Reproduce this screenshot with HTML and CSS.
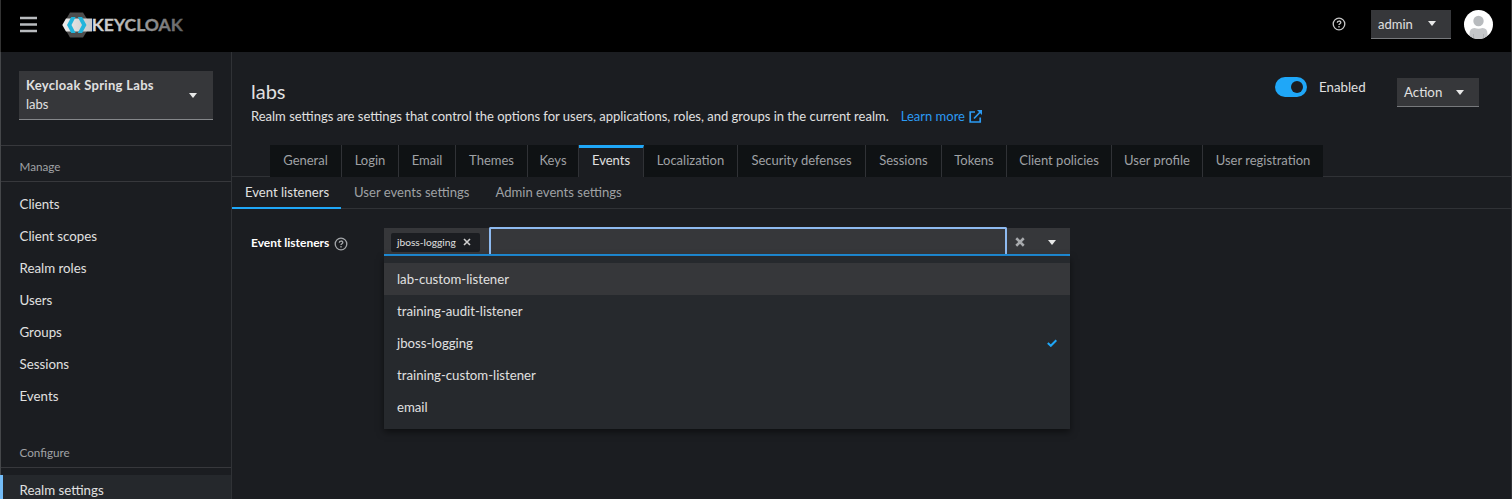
FILE: index.html
```html
<!DOCTYPE html>
<html lang="en"><head><meta charset="utf-8"><title>Keycloak Administration Console</title><link rel="stylesheet" href="styles.css"></head>
<body>
<header class="masthead">
  <svg class="burger" viewBox="0 0 17 15"><path d="M0 1h17M0 7.500h17M0 14h17" stroke="#b8bbbe" stroke-width="2.400"/></svg>
  <svg class="logo" viewBox="0 0 123 26" role="img" aria-label="Keycloak">
    <defs>
      <linearGradient id="word" x1="0" x2="1"><stop offset="0" stop-color="#dcdcdc"/><stop offset=".3" stop-color="#bdbdbd"/><stop offset="1" stop-color="#626262"/></linearGradient>
      <linearGradient id="band" x1="0" x2="1"><stop offset="0" stop-color="#eee"/><stop offset="1" stop-color="#c8c8c8"/></linearGradient>
    </defs>
    <path d="M8 .5h13L27 10v6L21 25.500H8L2.500 16v-6z" fill="#4d4d4d"/>
    <path d="M4 6.500h26v13H4L.3 13z" fill="url(#band)"/>
    <path d="M9.300 5h4.300L9.500 13l4.100 8H9.300L5 13z" fill="#21b5dc"/>
    <path d="M15.800 5h4.300L24.500 13l-4.400 8h-4.300L20 13z" fill="#21b5dc"/>
    <text class="word" x="29.800" y="19.300" textLength="91" lengthAdjust="spacingAndGlyphs" fill="url(#word)">KEYCLOAK</text>
  </svg>
  <svg class="help top-help" viewBox="0 0 14 14"><circle cx="7" cy="7" r="5.800"/><path d="M5.300 5.700C5.300 3.500 8.800 3.500 8.800 5.500 8.800 6.900 7 6.700 7 8.100M7 9.100v1.300"/></svg>
  <button class="toggle user"><span>admin</span><i class="caret"></i></button>
  <svg class="avatar" viewBox="0 0 29 29"><defs><clipPath id="round"><circle cx="14.500" cy="14.500" r="14.500"/></clipPath></defs><g clip-path="url(#round)"><path fill="#fff" d="M0 0h29v29H0z"/><circle cx="14.500" cy="11" r="5.200" fill="#b8bbbe"/><path d="M5.500 29v-5q0-6 5-6 4 1.500 8 0 5 0 5 6v5z" fill="#c4c6c8"/><path d="M9.500 24v5M19.500 24v5" stroke="#b0b2b5"/></g></svg>
</header>
<div class="body">
  <nav class="sidebar">
    <div class="realm-box"><button class="realm"><span><b>Keycloak Spring Labs</b><span class="realm-id">labs</span></span><i class="caret"></i></button></div>
    <h2 class="group">Manage</h2>
    <ul class="nav"><li><span>Clients</span></li><li><span>Client scopes</span></li><li><span>Realm roles</span></li><li><span>Users</span></li><li><span>Groups</span></li><li><span>Sessions</span></li><li><span>Events</span></li></ul>
    <h2 class="group second">Configure</h2>
    <ul class="nav"><li class="current"><span>Realm settings</span></li></ul>
  </nav>
  <main class="main">
    <section class="head">
      <div class="intro"><h1>labs</h1><p><span class="desc">Realm settings are settings that control the options for users, applications, roles, and groups in the current realm.</span><a class="learn"><span>Learn more</span><svg viewBox="0 0 13 13"><path d="M6 2H1.200v10h10V7.500M5 8.500 11.700 1.500" fill="none" stroke="currentColor" stroke-width="1.700"/><path d="M8 0h5v5z" fill="currentColor"/></svg></a></p></div>
      <span class="switch"></span><span class="enabled">Enabled</span>
      <button class="toggle action"><span>Action</span><i class="caret"></i></button>
    </section>
    <div class="tabs"><span class="tab">General</span><span class="tab">Login</span><span class="tab">Email</span><span class="tab">Themes</span><span class="tab">Keys</span><span class="tab active">Events</span><span class="tab">Localization</span><span class="tab">Security defenses</span><span class="tab">Sessions</span><span class="tab">Tokens</span><span class="tab">Client policies</span><span class="tab">User profile</span><span class="tab">User registration</span></div>
    <div class="subtabs"><span class="subtab chosen">Event listeners</span><span class="subtab">User events settings</span><span class="subtab">Admin events settings</span></div>
    <div class="form">
      <label class="label"><span>Event listeners</span><svg class="help" viewBox="0 0 14 14"><circle cx="7" cy="7" r="5.800"/><path d="M5.300 5.700C5.300 3.500 8.800 3.500 8.800 5.500 8.800 6.900 7 6.700 7 8.100M7 9.100v1.300"/></svg></label>
      <div class="select">
        <div class="control">
          <span class="chip"><span>jboss-logging</span><svg class="x" viewBox="0 0 8 8"><path d="m1 1 6 6m0-6L1 7"/></svg></span>
          <span class="field"></span>
          <svg class="x clear" viewBox="0 0 8 8"><path d="m1 1 6 6m0-6L1 7"/></svg><i class="caret"></i>
        </div>
        <ul class="menu"><li class="hover"><span>lab-custom-listener</span></li><li><span>training-audit-listener</span></li><li><span>jboss-logging</span><svg class="check" viewBox="0 0 10 8"><path d="m.8 4 3 2.800L9.300 1.200"/></svg></li><li><span>training-custom-listener</span></li><li><span>email</span></li></ul>
      </div>
    </div>
  </main>
</div>
</body></html>
```
FILE: styles.css
```css
* { box-sizing: border-box; }
body { margin: 0; width: 1512px; height: 499px; overflow: hidden; background: #1b1d21; color: #e0e0e0; font: 13px/20px Lato, sans-serif; }
h1, h2, p, ul { margin: 0; padding: 0; font-weight: 400; list-style: none; }
button { font: inherit; color: inherit; border: 0; text-align: left; }
svg { display: block; flex: none; }
.caret { flex: none; border: 4.500px solid transparent; border-top: 5px solid #e8e8e8; border-bottom: 0; }
.masthead { height: 52px; background: #000; display: flex; align-items: center; padding: 0 20px 4px 19px; border-left: 1px solid #333; border-right: 1px solid #333; }
.burger { width: 17px; height: 15px; overflow: visible; }
.logo { width: 123px; height: 26px; margin: 2px 0 0 25px; }
.word { font: 700 17.500px Lato, sans-serif; stroke: url(#word); stroke-width: .3; }
.help { width: 14px; height: 14px; fill: none; stroke: #a3a6a9; stroke-width: 1.300; }
.top-help { margin-left: auto; stroke: #c7c7c7; }
.toggle { display: flex; align-items: center; justify-content: space-between; background: #36373a; border-bottom: 1px solid #77797c; height: 29px; padding: 0 15px 0 7px; font-size: 13.300px; }
.user { width: 80px; margin-left: 25px; font-size: 13px; }
.avatar { width: 29px; height: 29px; margin-left: 13px; margin-right: -2px; }
.body { display: grid; grid-template-columns: 232px 1fr; height: 447px; }
.sidebar { border-left: 1px solid #45474a; border-right: 1px solid #303236; }
.realm-box { height: 94px; padding: 19px 18px; border-bottom: 1px solid #37383c; }
.realm { width: 194px; height: 49px; display: flex; align-items: center; justify-content: space-between; background: #36373a; border-bottom: 1px solid #85878a; padding: 0 16px 0 7px; line-height: 19px; }
.realm b, .realm-id { display: block; }
.realm b { letter-spacing: .3px; }
.group { height: 36px; border-bottom: 1px solid #37383c; font-size: 11.700px; line-height: 20px; padding: 10px 0 0 18.500px; color: #a0a2a5; }
.nav { padding-top: 7px; font-size: 13.300px; }
.nav li { height: 32px; line-height: 31px; padding-left: 18.500px; }
.second { margin-top: 19px; }
.nav .current { background: #25282c; border-left: 3px solid #73bcf7; margin-left: -1px; padding-left: 16.500px; line-height: 31px; }
.main { border-right: 1px solid #303236; min-width: 0; }
.head { height: 93px; display: flex; padding-left: 19px; }
.intro { width: 1024px; }
h1 { font-size: 20px; line-height: 28px; padding: 25px 0 1px; }
p { display: flex; white-space: nowrap; }
.learn { color: #2b9af3; display: flex; align-items: center; margin-left: 12px; gap: 4px; }
.learn svg { width: 13px; height: 13px; }
.switch { width: 32px; height: 20px; margin-top: 25px; border-radius: 10px; background: #1fa7f8; padding: 4px; }
.switch::after { content: ""; display: block; width: 12px; height: 12px; margin-left: 12px; border-radius: 50%; background: #1b1d21; }
.enabled { margin: 25px 0 0 12px; width: 78px; font-size: 13.300px; }
.action { width: 82px; height: 29px; margin-top: 26px; }
.tabs { display: grid; grid-template-columns: 72px 57px 57px 72px 51px 65px 94px 128px 76px 65px 105px 91px 120px; height: 32px; padding-left: 38px; border-bottom: 1px solid #303236; white-space: nowrap; }
.tab { background: #0f1214; color: #9fa1a4; text-align: center; line-height: 31px; border-right: 1px solid #303236; }
.tab:last-child { border-right: 0; }
.active { background: #1b1d21; color: #e0e0e0; border-top: 3px solid #1fa7f8; line-height: 25px; height: 32px; }
.subtabs { height: 32px; display: flex; border-bottom: 1px solid #303236; line-height: 31px; color: #9fa1a4; white-space: nowrap; font-size: 13.100px; }
.subtab { padding: 0 13px; height: 32px; }
.chosen { width: 109px; color: #e0e0e0; border-bottom: 2px solid #1fa7f8; }
.form { display: flex; padding: 19px 0 0 19px; }
.label { width: 133px; height: 29px; display: flex; align-items: center; gap: 5px; font-weight: 700; font-size: 12px; color: #fff; white-space: nowrap; }
.label .help { margin-top: 3px; }
.select { width: 686px; position: relative; }
.control { height: 28px; background: #36373a; display: flex; align-items: center; border-bottom: 2px solid #1f8fdc; padding: 0 14px 0 7px; }
.chip { width: 89px; height: 19px; display: flex; align-items: center; justify-content: space-between; background: #1b1d21; border-radius: 2px; padding: 0 9px 0 6px; font-size: 10.200px; margin-top: 2px; }
.x { width: 8px; height: 8px; fill: none; stroke: #d0d0d0; stroke-width: 1.600; }
.field { width: 518px; height: 27px; margin: -1px 8px 0 9px; border: 2px solid #8ebaf0; border-bottom: 0; border-radius: 2px 2px 0 0; }
.clear { width: 10px; height: 10px; margin-top: 1px; stroke: #a8aaad; stroke-width: 2; margin-right: auto; }
.control .caret { margin-top: 2px; }
.menu { position: absolute; top: 28px; left: 0; width: 686px; padding: 7px 0 6px; background: #26292d; box-shadow: 0 3px 7px rgba(0,0,0,.5); font-size: 13.200px; }
.menu li { height: 32px; line-height: 32px; padding: 0 13px; display: flex; align-items: center; justify-content: space-between; }
.menu .hover { background: #36373a; }
.check { width: 10px; height: 8px; fill: none; stroke: #1fa7f8; stroke-width: 2; }
```
